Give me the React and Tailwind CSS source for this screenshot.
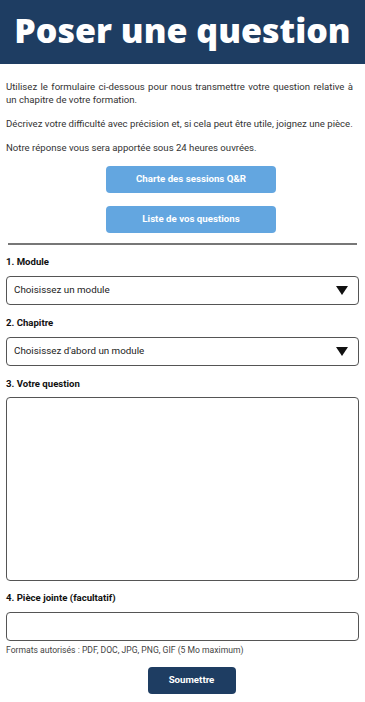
import React from "react";

const Caret = () => (
  <svg width="12" height="9" viewBox="0 0 12 9" className="shrink-0">
    <path d="M0 0 L12 0 L6 9 Z" fill="#111" />
  </svg>
);

const Select = ({ text }) => (
  <div className="flex items-center justify-between h-[29px] border border-[#555] rounded-[4px] pl-[7px] pr-[10px] text-[9.8px] text-[#222]">
    <span>{text}</span>
    <Caret />
  </div>
);

const Label = ({ children, className = "" }) => (
  <div className={`text-[9.6px] leading-[13px] font-bold text-[#111] ${className}`}>{children}</div>
);

const App = () => {
  return (
    <div className="min-h-screen bg-white font-['Roboto',sans-serif] text-[#222]">
      {/* Header */}
      <div className="bg-[#1e3d62] h-[64px] flex items-center justify-center">
        <h1 className="text-white font-['Open_Sans',sans-serif] font-extrabold text-[34px] leading-none whitespace-nowrap -mt-[4px]">
          Poser une question
        </h1>
      </div>

      <div className="px-[6px]">
        <div className="pt-[16px] text-[9.6px] leading-[13px] text-[#333]">
          <p className="text-justify pr-[6px]">
            Utilisez le formulaire ci-dessous pour nous transmettre votre question relative à un chapitre de votre formation.
          </p>
          <p className="mt-[11px]">
            Décrivez votre difficulté avec précision et, si cela peut être utile, joignez une pièce.
          </p>
          <p className="mt-[11px]">Notre réponse vous sera apportée sous 24 heures ouvrées.</p>
        </div>

        <div className="flex flex-col items-center gap-[13px] mt-[12px] pl-[17px]">
          <button className="w-[170px] h-[27px] rounded-[4px] bg-[#63a6e0] text-white text-[9.7px] font-bold">
            Charte des sessions Q&amp;R
          </button>
          <button className="w-[170px] h-[27px] rounded-[4px] bg-[#63a6e0] text-white text-[9.7px] font-bold">
            Liste de vos questions
          </button>
        </div>

        <div className="mx-[2px] mt-[10px] h-[2px] bg-[#777]" />

        <div className="mt-[10px]">
          <Label className="mb-[8px]">1. Module</Label>
          <Select text="Choisissez un module" />
        </div>

        <div className="mt-[11px]">
          <Label className="mb-[8px]">2. Chapitre</Label>
          <Select text="Choisissez d'abord un module" />
        </div>

        <div className="mt-[11px]">
          <Label className="mb-[7px]">3. Votre question</Label>
          <div className="h-[184px] border border-[#555] rounded-[4px]" />
        </div>

        <div className="mt-[10px]">
          <Label className="mb-[8px]">4. Pièce jointe (facultatif)</Label>
          <div className="h-[29px] border border-[#555] rounded-[4px]" />
          <div className="mt-[3px] text-[8.6px] leading-[12px] text-[#444]">
            Formats autorisés : PDF, DOC, JPG, PNG, GIF (5 Mo maximum)
          </div>
        </div>

        <div className="flex justify-center mt-[11px] pb-[8px] pl-[18px]">
          <button className="w-[88px] h-[27px] rounded-[4px] bg-[#1e3d62] text-white text-[9.7px] font-bold">
            Soumettre
          </button>
        </div>
      </div>
    </div>
  );
};

export default App;
